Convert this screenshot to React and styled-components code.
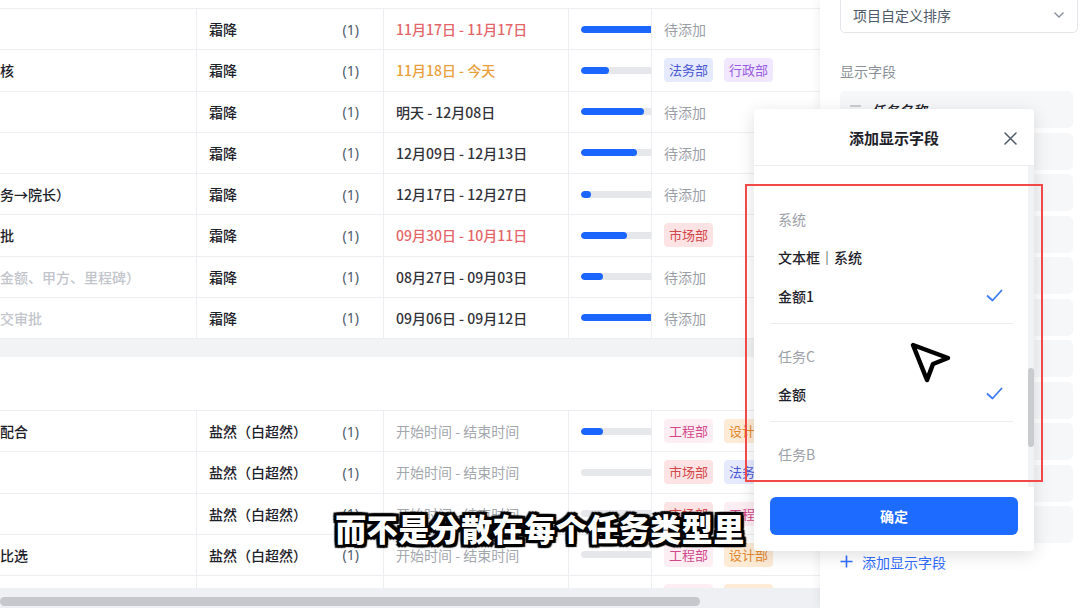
import React from 'react'
import styled, { createGlobalStyle } from 'styled-components'

const GlobalStyle = createGlobalStyle`
  html, body {
    margin: 0;
    padding: 0;
    background: #ffffff;
  }
  body {
    font-family: "Noto Sans CJK SC", "Noto Sans", sans-serif;
    overflow: hidden;
  }
  * {
    box-sizing: border-box;
  }
`

const Screen = styled.div`
  position: relative;
  width: 1080px;
  height: 608px;
  display: flex;
  overflow: hidden;
  background: #ffffff;
`

/* ---------- table ---------- */

const TableArea = styled.div`
  width: 820px;
  flex-shrink: 0;
  display: flex;
  flex-direction: column;
`
const TableBody = styled.div`
  height: 588px;
  overflow: hidden;
`
const EdgeRow = styled.div`
  height: 9px;
  border-bottom: 1px solid #eceef1;
`
const Row = styled.div`
  display: flex;
  height: 41.25px;
  border-bottom: 1px solid #eceef1;
  font-size: 14px;
  white-space: nowrap;
`
const BaseCell = styled.div`
  flex-shrink: 0;
  display: flex;
  align-items: center;
  border-right: 1px solid #eceef1;
  overflow: hidden;
`
const NameCell = styled(BaseCell)`
  width: 197px;
  font-weight: 500;
  color: ${(p) => (p.$muted ? '#c2c5cb' : '#1d2129')};
`
const OwnerCell = styled(BaseCell)`
  width: 187px;
  justify-content: space-between;
  padding: 0 24px 0 12px;
  color: #1d2129;
  font-weight: 500;
`
const Count = styled.span`
  color: #4e5969;
  font-weight: 400;
  font-family: "Noto Sans", sans-serif;
`
const dateColors = {
  late: '#e2585b',
  today: '#e8982c',
  normal: '#1d2129',
  empty: '#a3a7ae',
}
const DateCell = styled(BaseCell)`
  width: 185px;
  padding-left: 12px;
  font-weight: ${(p) => (p.$tone === 'empty' ? 400 : 500)};
  color: ${(p) => dateColors[p.$tone]};
  opacity: ${(p) => (p.$tone === 'empty' ? 1 : 0.92)};
`
const ProgressCell = styled(BaseCell)`
  width: 83px;
  padding-left: 12px;
`
const Track = styled.div`
  width: 80px;
  height: 7px;
  flex-shrink: 0;
  border-radius: 4px;
  background: #e6e7ea;
  overflow: hidden;
`
const Fill = styled.div`
  height: 100%;
  border-radius: 4px;
  background: #1b66ff;
`
const TagCell = styled.div`
  flex: 1;
  display: flex;
  align-items: center;
  gap: 11px;
  padding-left: 12px;
  overflow: hidden;
`
const Pending = styled.span`
  color: #9ba0a8;
`
const tagTheme = {
  法务部: ['#e6eaff', '#4a57d4'],
  行政部: ['#f1e8ff', '#9a5ce0'],
  市场部: ['#fde3e3', '#d2474a'],
  工程部: ['#fdeef4', '#d2478a'],
  设计部: ['#fdebd6', '#e3872c'],
}
const Tag = styled.span`
  flex-shrink: 0;
  height: 24px;
  line-height: 24px;
  padding: 0 5px;
  border-radius: 4px;
  font-size: 13px;
  background: ${(p) => tagTheme[p.$name][0]};
  color: ${(p) => tagTheme[p.$name][1]};
`
const GroupBand = styled.div`
  height: 18px;
  background: #f2f3f5;
`
const GroupHeader = styled.div`
  height: 54px;
  border-bottom: 1px solid #eceef1;
`
const HScroll = styled.div`
  flex: 1;
  background: #eef0f3;
  padding-top: 9px;
`
const HThumb = styled.div`
  width: 700px;
  height: 9px;
  border-radius: 5px;
  background: #c5c8cd;
`

/* ---------- sidebar ---------- */

const Sidebar = styled.aside`
  flex: 1;
  display: flex;
  flex-direction: column;
  padding: 0 7px 0 20px;
  box-shadow: -2px 0 8px rgba(0, 0, 0, 0.06);
  z-index: 1;
  background: #ffffff;
`
const SortSelect = styled.div`
  height: 37px;
  margin: -4px -5px 0 0;
  display: flex;
  align-items: center;
  justify-content: space-between;
  padding: 0 12px 0 12px;
  border: 1px solid #e5e6eb;
  border-radius: 5px;
  font-size: 14px;
  color: #4e5969;
`
const SectionLabel = styled.div`
  margin: 28px 0 10px;
  line-height: 20px;
  font-size: 14px;
  color: #8a9099;
`
const FieldRow = styled.div`
  height: 37px;
  margin-bottom: 4.5px;
  display: flex;
  align-items: center;
  gap: 12px;
  padding-left: 10px;
  border-radius: 5px;
  background: #f6f7f9;
  font-size: 14px;
  font-weight: 500;
  color: #1d2129;
`
const AddField = styled.div`
  margin-top: 4px;
  display: flex;
  align-items: center;
  gap: 9px;
  line-height: 20px;
  font-size: 14px;
  color: #2f6bff;
`

/* ---------- modal ---------- */

const Modal = styled.div`
  position: absolute;
  left: 754px;
  top: 109px;
  width: 280px;
  height: 442px;
  display: flex;
  flex-direction: column;
  background: #ffffff;
  border-radius: 4px;
  box-shadow: 0 4px 18px rgba(0, 0, 0, 0.13);
  z-index: 5;
`
const ModalHead = styled.div`
  position: relative;
  height: 57px;
  display: flex;
  align-items: center;
  justify-content: center;
  border-bottom: 1px solid #ebedf0;
  font-size: 15px;
  font-weight: 700;
  color: #1d2129;
`
const CloseBtn = styled.span`
  position: absolute;
  right: 17px;
  top: 23px;
  display: flex;
`
const ListArea = styled.div`
  height: 321px;
  display: flex;
  overflow: hidden;
`
const ListContent = styled.div`
  flex: 1;
  padding: 35px 15px 0 16px;
`
const ScrollTrack = styled.div`
  width: 6px;
  background: #f1f2f4;
  padding-top: 202px;
`
const ScrollThumb = styled.div`
  height: 79px;
  border-radius: 3px;
  background: #c9cbcf;
`
const Group = styled.div`
  padding: ${(p) => (p.$first ? '0 0 8px' : '14px 0 8px')};
  border-bottom: ${(p) => (p.$last ? 'none' : '1px solid #ebedf0')};
`
const GroupTitle = styled.div`
  height: 36px;
  display: flex;
  align-items: center;
  padding-left: 8px;
  font-size: 14px;
  color: #9da1a8;
`
const FieldItem = styled.div`
  height: 39px;
  display: flex;
  align-items: center;
  justify-content: space-between;
  padding: 0 10px 0 8px;
  font-size: 14px;
  font-weight: 500;
  color: #1d2129;
`
const ModalFoot = styled.div`
  flex: 1;
  padding: 10px 16px 0;
`
const ConfirmBtn = styled.div`
  height: 38px;
  display: flex;
  align-items: center;
  justify-content: center;
  border-radius: 6px;
  background: #1e6bff;
  color: #ffffff;
  font-size: 14px;
  font-weight: 700;
`

/* ---------- overlays ---------- */

const Highlight = styled.div`
  position: absolute;
  left: 745px;
  top: 184px;
  width: 298px;
  height: 298px;
  border: 2px solid #f24848;
  z-index: 6;
`
const Pointer = styled.svg`
  position: absolute;
  left: 905px;
  top: 338px;
  z-index: 7;
`
const Caption = styled.div`
  position: absolute;
  left: 0;
  right: 0;
  top: 505px;
  text-align: center;
  font-size: 31px;
  font-weight: 900;
  letter-spacing: 0.5px;
  color: #ffffff;
  z-index: 8;
  text-shadow:
    2px 0 0 #000, -2px 0 0 #000, 0 2px 0 #000, 0 -2px 0 #000,
    2px 2px 0 #000, -2px -2px 0 #000, 2px -2px 0 #000, -2px 2px 0 #000,
    3px 0 1px #000, -3px 0 1px #000, 0 3px 1px #000, 0 -3px 1px #000,
    3px 3px 1px #000, -3px -3px 1px #000, 3px -3px 1px #000, -3px 3px 1px #000;
`

/* ---------- data ---------- */

const firstGroup = [
  { name: '', date: '11月17日 - 11月17日', tone: 'late', pct: 100, tags: [] },
  { name: '核', date: '11月18日 - 今天', tone: 'today', pct: 35, tags: ['法务部', '行政部'] },
  { name: '', date: '明天 - 12月08日', tone: 'normal', pct: 79, tags: [] },
  { name: '', date: '12月09日 - 12月13日', tone: 'normal', pct: 70, tags: [] },
  { name: '务→院长）', date: '12月17日 - 12月27日', tone: 'normal', pct: 13, tags: [] },
  { name: '批', date: '09月30日 - 10月11日', tone: 'late', pct: 58, tags: ['市场部'] },
  { name: '金额、甲方、里程碑）', muted: true, date: '08月27日 - 09月03日', tone: 'normal', pct: 28, tags: [] },
  { name: '交审批', muted: true, date: '09月06日 - 09月12日', tone: 'normal', pct: 100, tags: [] },
]

const secondGroup = [
  { name: '配合', pct: 28, tags: ['工程部', '设计部'] },
  { name: '', pct: 0, tags: ['市场部', '法务部'] },
  { name: '', pct: 0, tags: ['市场部', '工程部'] },
  { name: '比选', pct: 0, tags: ['工程部', '设计部'] },
  { name: '', pct: 0, tags: ['工程部', '设计部'] },
]

const pickerGroups = [
  { title: '系统', items: [{ label: '文本框｜系统' }, { label: '金额1', checked: true }] },
  { title: '任务C', items: [{ label: '金额', checked: true }] },
  { title: '任务B', items: [] },
]

const Check = () => (
  <svg width="17" height="13" viewBox="0 0 17 13">
    <polyline points="1.5,7 6.5,11.5 15.5,1.5" fill="none" stroke="#3d7cf2" strokeWidth="1.8" strokeLinecap="round" strokeLinejoin="round" />
  </svg>
)

const TaskRow = ({ name, muted, owner, date, tone, pct, tags }) => (
  <Row>
    <NameCell $muted={muted}>{name}</NameCell>
    <OwnerCell>
      {owner}
      <Count>(1)</Count>
    </OwnerCell>
    <DateCell $tone={tone}>{date}</DateCell>
    <ProgressCell>
      <Track>
        <Fill style={{ width: `${pct}%` }} />
      </Track>
    </ProgressCell>
    <TagCell>
      {tags.length === 0 ? (
        <Pending>待添加</Pending>
      ) : (
        tags.map((t) => (
          <Tag key={t} $name={t}>
            {t}
          </Tag>
        ))
      )}
    </TagCell>
  </Row>
)

export default function App() {
  return (
    <Screen>
      <GlobalStyle />
      <TableArea>
        <TableBody>
          <EdgeRow />
          {firstGroup.map((r, i) => (
            <TaskRow key={i} owner="霜降" {...r} />
          ))}
          <GroupBand />
          <GroupHeader />
          {secondGroup.map((r, i) => (
            <TaskRow key={i} owner="盐然（白超然）" date="开始时间 - 结束时间" tone="empty" {...r} />
          ))}
        </TableBody>
        <HScroll>
          <HThumb />
        </HScroll>
      </TableArea>

      <Sidebar>
        <SortSelect>
          项目自定义排序
          <svg width="12" height="8" viewBox="0 0 12 8">
            <polyline points="1.5,1.5 6,6 10.5,1.5" fill="none" stroke="#86909c" strokeWidth="1.4" />
          </svg>
        </SortSelect>
        <SectionLabel>显示字段</SectionLabel>
        {Array.from({ length: 11 }).map((_, i) => (
          <FieldRow key={i}>
            {i === 0 && (
              <>
                <svg width="11" height="9" viewBox="0 0 11 9">
                  <path d="M0 1h11M0 4.5h11M0 8h11" stroke="#a0a4ab" strokeWidth="1.2" />
                </svg>
                任务名称
              </>
            )}
          </FieldRow>
        ))}
        <AddField>
          <svg width="13" height="13" viewBox="0 0 13 13">
            <path d="M6.5 0.5v12M0.5 6.5h12" stroke="#2f6bff" strokeWidth="1.6" />
          </svg>
          添加显示字段
        </AddField>
      </Sidebar>

      <Modal>
        <ModalHead>
          添加显示字段
          <CloseBtn>
            <svg width="13" height="13" viewBox="0 0 13 13">
              <path d="M1 1l11 11M12 1L1 12" stroke="#4e5969" strokeWidth="1.5" strokeLinecap="round" />
            </svg>
          </CloseBtn>
        </ModalHead>
        <ListArea>
          <ListContent>
            {pickerGroups.map((g, gi) => (
              <Group key={g.title} $first={gi === 0} $last={gi === pickerGroups.length - 1}>
                <GroupTitle>{g.title}</GroupTitle>
                {g.items.map((it) => (
                  <FieldItem key={it.label}>
                    {it.label}
                    {it.checked && <Check />}
                  </FieldItem>
                ))}
              </Group>
            ))}
          </ListContent>
          <ScrollTrack>
            <ScrollThumb />
          </ScrollTrack>
        </ListArea>
        <ModalFoot>
          <ConfirmBtn>确定</ConfirmBtn>
        </ModalFoot>
      </Modal>

      <Highlight />
      <Pointer width="50" height="50" viewBox="0 0 50 50">
        <path d="M8 7 L43 20 L28 26 L22 42 Z" fill="#ffffff" stroke="#000000" strokeWidth="4.5" strokeLinejoin="round" />
      </Pointer>
      <Caption>而不是分散在每个任务类型里</Caption>
    </Screen>
  )
}
